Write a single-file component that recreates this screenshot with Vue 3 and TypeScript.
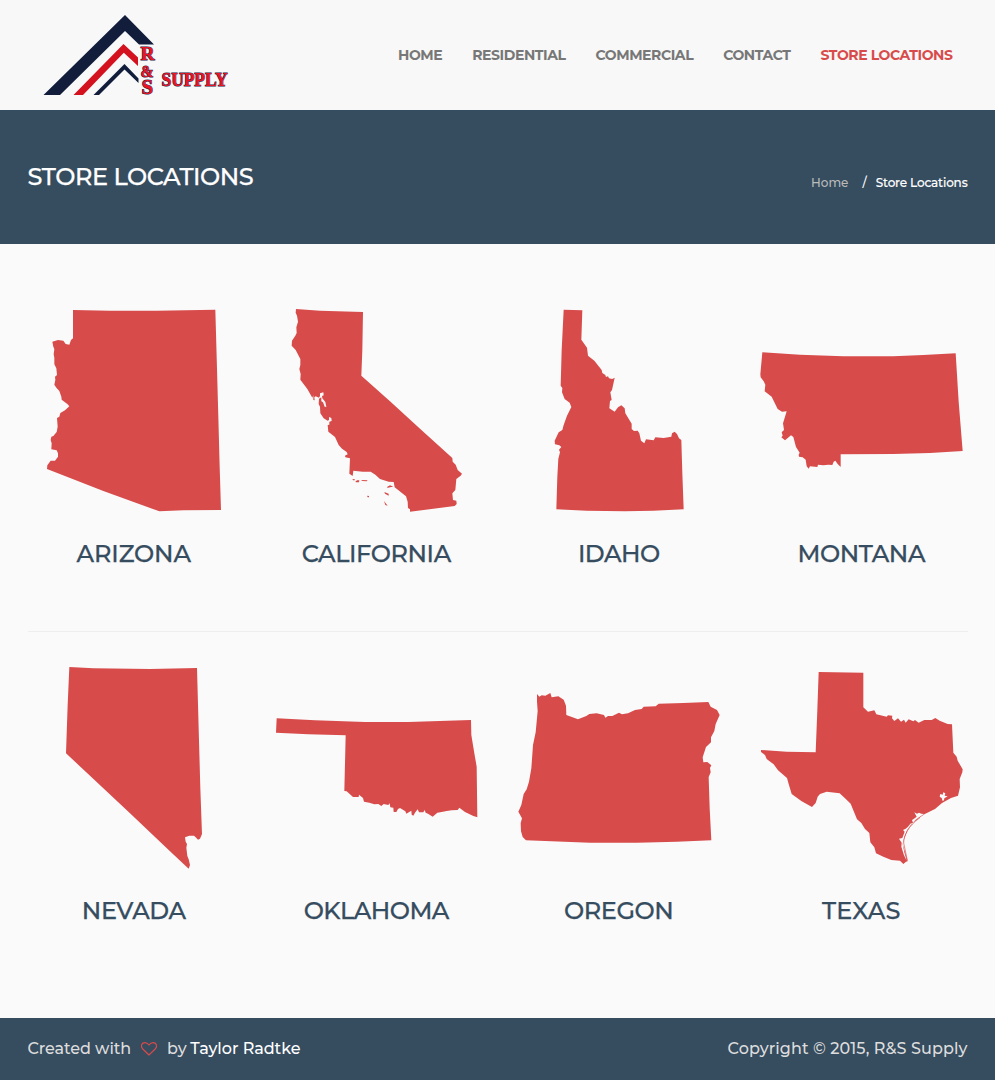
<script setup lang="ts">
interface NavItem { label: string; cls: string; active?: boolean }
interface StateItem { name: string; cls: string; view: string; path: string }

const nav: NavItem[] = [
  { label: 'Home', cls: 'n-home' },
  { label: 'Residential', cls: 'n-res' },
  { label: 'Commercial', cls: 'n-com' },
  { label: 'Contact', cls: 'n-con' },
  { label: 'Store Locations', cls: 'n-sto', active: true },
]

const rows: StateItem[][] = [
  [
    {
      name: 'Arizona', cls: 's-az', view: '9 27 607.5 607.5',
      path: 'M129 30L240 32L380 32L556 29L560 170L565 350L569 500L573 630L460 631L388 634L220 573L51 507L52 496L62 482L75 482L84 470L84 460L80 451L64 448L65 430L62 420L64 410L70 408L80 396L83 380L81 354L88 350L91 339L105 331L118 319L112 312L95 299L94 290L88 273L79 263L73 254L76 240L75 230L81 225L79 205L73 193L73 173L71 163L73 147L70 140L67 125L84 120L100 122L107 132L118 134L123 120L129 115Z',
    },
    {
      name: 'California', cls: 's-ca', view: '-15 27 607.5 607.5',
      path: 'M48 27L120 32L249 36L247 150L244 227L330 304L420 386L517 474L518 485L527 494L533 510L546 521L542 527L529 537L526 570L517 580L519 600L529 602L530 612L524 618L460 626L390 635L390 628L384 624L383 605L378 589L344 562L341 546L326 545L300 537L286 524L272 515L248 515L220 512L218 528L208 521L210 475L196 472L195 467L203 463L200 456L186 446L176 435L165 411L145 395L143 375L148 374L148 365L155 363L154 354L147 351L147 360L143 362L131 355L121 340L120 320L116 312L117 296L124 292L124 304L129 307L134 320L139 321L136 306L127 295L126 288L131 286L130 277L120 280L120 288L117 293L107 289L103 292L104 301L100 300L100 286L97 293L82 267L61 239L62 222L58 207L61 195L61 177L47 150L35 137L36 122L46 107L50 99L49 82L54 65L51 47L47 38ZM217 538L224 537L224 541L219 541ZM226 545L231 541L238 541L237 547L228 547ZM243 540L263 541L260 544L247 543ZM322 560L330 556L340 560L330 562L322 564ZM313 576L326 581L326 587L315 581ZM312 603L323 617L316 615ZM261 587L267 588L267 592L263 592Z',
    },
    {
      name: 'Idaho', cls: 's-id', view: '-66 27 607.5 607.5',
      path: 'M71 29L127 31L124 119L141 143L144 167L163 182L185 210L187 219L196 225L198 231L204 229L207 235L217 237L224 233L216 270L211 277L215 300L210 303L208 325L224 335L234 322L244 316L254 325L256 340L275 371L275 387L282 393L293 392L298 400L303 422L313 430L318 418L341 421L346 412L371 414L394 410L396 400L404 395L411 402L417 415L424 420L427 520L431 628L340 632L254 634L140 632L49 628L52 530L55 476L60 457L57 449L64 441L58 436L45 433L44 422L56 397L67 390L71 375L81 347L94 321L89 308L74 297L66 277L67 264L62 257L65 150Z',
    },
    {
      name: 'Montana', cls: 's-mt', view: '30 -93 607.5 607.5',
      path: 'M37 37L150 44L280 49L430 49L520 45L617 40L626 185L638 333L540 339L430 342L272 343L272 381L263 372L256 362L251 365L247 375L235 374L220 376L204 374L202 381L180 379L176 386L170 379L167 359L158 352L147 350L146 344L149 338L138 321L130 291L123 286L105 301L94 292L98 287L95 277L102 270L99 250L105 230L110 214L96 215L83 207L65 170L44 154L46 134L41 124L32 112L31 103Z',
    },
  ],
  [
    {
      name: 'Nevada', cls: 's-nv', view: '-51 36 607.5 607.5',
      path: 'M58 36L130 40L300 42L441 39L446 220L451 400L456 537L450 551L444 554L437 547L432 542L418 542L405 547L407 560L411 567L409 578L412 603L416 613L420 630L416 641L360 589L240 475L120 362L48 295L53 150Z',
    },
    {
      name: 'Oklahoma', cls: 's-ok', view: '30 -99 607.5 607.5',
      path: 'M35 55L150 61L300 66L430 66L618 60L619 105L628 160L635 200L637 352L625 348L600 336L583 323L578 330L560 331L545 333L526 337L517 338L503 350L489 341L482 338L479 330L475 337L462 337L458 328L450 338L445 347L440 344L439 332L424 341L421 334L405 324L399 327L394 336L386 336L385 323L376 322L374 310L370 315L356 312L349 318L340 312L328 313L313 308L297 305L294 294L282 284L281 291L264 291L245 274L238 273L242 106L130 103L33 98Z',
    },
    {
      name: 'Oregon', cls: 's-or', view: '24 -54 607.5 607.5',
      path: 'M81 27L88 35L95 31L106 32L121 24L125 37L145 34L161 44L168 62L169 90L204 103L229 93L238 87L260 85L282 90L286 98L294 93L307 93L327 83L336 88L354 85L375 75L395 72L401 65L437 64L446 56L520 54L595 51L602 65L621 75L629 90L617 117L613 138L603 157L603 172L588 186L578 217L580 232L592 231L604 241L600 249L602 262L596 276L599 370L604 466L500 470L380 473L240 473L48 466L38 456L33 439L32 415L36 400L25 380L34 360L41 327L50 313L57 290L64 250L69 180L77 142L83 78L81 50Z',
    },
    {
      name: 'Texas', cls: 's-tx', view: '30 21 607.5 607.5',
      path: 'M206 36L340 38L340 142L354 155L373 151L379 163L410 170L414 166L427 167L426 175L433 183L444 175L453 185L462 179L467 188L476 178L490 184L495 180L506 188L523 180L545 180L556 174L569 182L593 192L606 193L610 278L620 290L623 302L638 328L637 337L629 357L630 382L624 407L603 414L576 429L555 447L523 463L503 477L487 490L473 510L463 535L458 553L464 572L473 604L468 605L460 612L450 602L424 600L400 590L378 580L373 562L361 547L358 519L345 507L334 489L321 478L302 431L285 415L269 400L230 395L210 402L203 410L197 429L186 441L155 424L125 402L116 372L111 354L84 331L71 313L50 297L45 285L33 276L33 270L110 275L197 277L202 150Z',
    },
  ],
]
</script>

<template>
  <div class="page">
    <header class="header">
      <svg class="logo" viewBox="0 0 210 100" width="210" height="100" role="img" aria-label="R&amp;S Supply">
        <path d="M13.5 90L95 10L124 39.500H109L95 26L30 90Z" fill="#111d3a" />
        <path d="M43.5 90L93.5 39L108 52.500V61L93.800 47.800L53 90Z" fill="#d4121f" />
        <path d="M63.500 90L94.500 59L108.500 73.500V78L94.500 64.500L69 90Z" fill="#111d3a" />
        <g class="logo-text">
          <text x="110.500" y="54.500" font-size="19.500" textLength="14" lengthAdjust="spacingAndGlyphs">R</text>
          <text x="110.500" y="71.500" font-size="17" textLength="13" lengthAdjust="spacingAndGlyphs">&amp;</text>
          <text x="111.500" y="88.800" font-size="20" textLength="11.500" lengthAdjust="spacingAndGlyphs">S</text>
          <text x="131.500" y="81" font-size="18.500" textLength="66" lengthAdjust="spacingAndGlyphs">SUPPLY</text>
        </g>
      </svg>
      <nav class="nav">
        <a v-for="n in nav" :key="n.label" :class="[n.cls, { active: n.active }]">{{ n.label }}</a>
      </nav>
    </header>

    <section class="banner">
      <h1>Store Locations</h1>
      <div class="crumbs">
        <span class="crumb-home">Home</span><span class="slash">/</span><span class="crumb-here">Store Locations</span>
      </div>
    </section>

    <main class="main">
      <template v-for="(row, i) in rows" :key="i">
        <hr v-if="i > 0" />
        <div class="row">
          <div v-for="s in row" :key="s.name" class="state">
            <svg :viewBox="s.view" aria-hidden="true"><path :d="s.path" />
              <g v-if="s.name === 'Texas'" class="coast">
                <path d="M571 402L578 404L580 397L586 400L584 407L593 409L583 415L582 421L578 423L575 414L569 410Z" />
                <path d="M493 457L501 461L507 458L514 461L522 462L507 472L496 480L489 488L486 480L492 476L500 470Z" />
                <path d="M474 500L481 491L487 488L471 511L463 530L458 553L463 577L470 602L462 586L454 560L455 548L447 536L457 534L464 515L459 510L467 506Z" />
                <path class="barrier" d="M510 473C475 497 461 528 461 549L472 601" />
              </g>
            </svg>
            <h2><span :class="s.cls">{{ s.name }}</span></h2>
          </div>
        </div>
      </template>
    </main>

    <footer class="footer">
      <div class="credit">
        <span class="made">Created with</span>
        <svg class="heart" viewBox="0 0 16 14" width="16" height="14" aria-hidden="true">
          <path d="M8 13L1.800 7C-.8 4.200.6.7 4 .7C6 .7 7.200 2 8 3C8.800 2 10 .7 12 .7C15.400.7 16.800 4.200 14.200 7Z" />
        </svg>
        <span class="by">by</span>
        <span class="author">Taylor Radtke</span>
      </div>
      <div class="copy">Copyright © 2015, R&amp;S Supply</div>
    </footer>
  </div>
</template>

<style>
body { margin: 0; background: #fafafa; }
</style>

<style scoped>
.page { box-sizing: border-box; min-height: 1080px; display: flex; flex-direction: column; background: #fafafa; font-family: Montserrat, Inter, "Open Sans", sans-serif; }
.header { box-sizing: border-box; height: 110px; padding: 5px 27.5px 0 30px; display: flex; justify-content: space-between; background: #f8f8f8; }
.logo { display: block; flex: none; }
.logo-text { font-family: "Liberation Serif", serif; font-weight: 700; fill: #ea1422; stroke: #26264a; stroke-width: 1.100px; paint-order: stroke; }
.nav { display: flex; height: 100px; align-items: center; }
.nav a { padding: 0 15px; font-size: 14px; line-height: 20px; font-weight: 700; text-transform: uppercase; color: #777; white-space: nowrap; letter-spacing: -.42px; }
.nav a.active { color: #d84b4b; }
.banner { box-sizing: border-box; height: 134px; padding: 0 27.5px; display: flex; justify-content: space-between; align-items: center; background: #364c5f; color: #fff; }
.banner h1 { margin: 0; font-size: 24px; line-height: 30px; font-weight: 500; text-transform: uppercase; letter-spacing: -.43px; -webkit-text-stroke: .25px currentColor; }
.crumbs { display: flex; padding-top: 12px; font-size: 12px; line-height: 18px; font-weight: 500; white-space: nowrap; }
.crumb-home { color: #bbb; letter-spacing: .05px; }
.slash { margin: 0 9px 0 14px; }
.crumb-here { letter-spacing: -.15px; -webkit-text-stroke: .15px currentColor; }
.main { box-sizing: border-box; height: 774px; padding: 65px 12.5px 0; }
.row { display: grid; grid-template-columns: repeat(4, 1fr); }
.state svg { display: block; width: 202.5px; height: 202.5px; margin: 0 auto; fill: #d84b4b; }
.state .coast { fill: #fafafa; }
.state .coast .barrier { fill: none; stroke: #d84b4b; stroke-width: 2px; }
.state h2 { margin: 27px 0 0; font-size: 24px; line-height: 30px; font-weight: 500; text-align: center; text-transform: uppercase; color: #364c5f; letter-spacing: -.4px; -webkit-text-stroke: .25px currentColor; }
.s-az { letter-spacing: -.13px; }
.s-id, .s-ok { letter-spacing: -.52px; }
.s-tx { letter-spacing: .1px; }
hr { height: 1px; margin: 62.500px 15px 34.750px; border: 0; background: #eee; }
.footer { box-sizing: border-box; height: 62px; padding: 0 27.5px; display: flex; justify-content: space-between; align-items: center; background: #364c5f; color: #ddd; font-size: 16px; line-height: 22px; font-weight: 500; white-space: nowrap; }
.credit { display: flex; align-items: center; }
.made { letter-spacing: -.08px; }
.heart { margin: 0 10px; fill: none; stroke: #d84b4b; stroke-width: 1.200px; }
.author { margin-left: 3.500px; color: #fff; letter-spacing: -.03px; }
.copy { letter-spacing: .09px; }
</style>
